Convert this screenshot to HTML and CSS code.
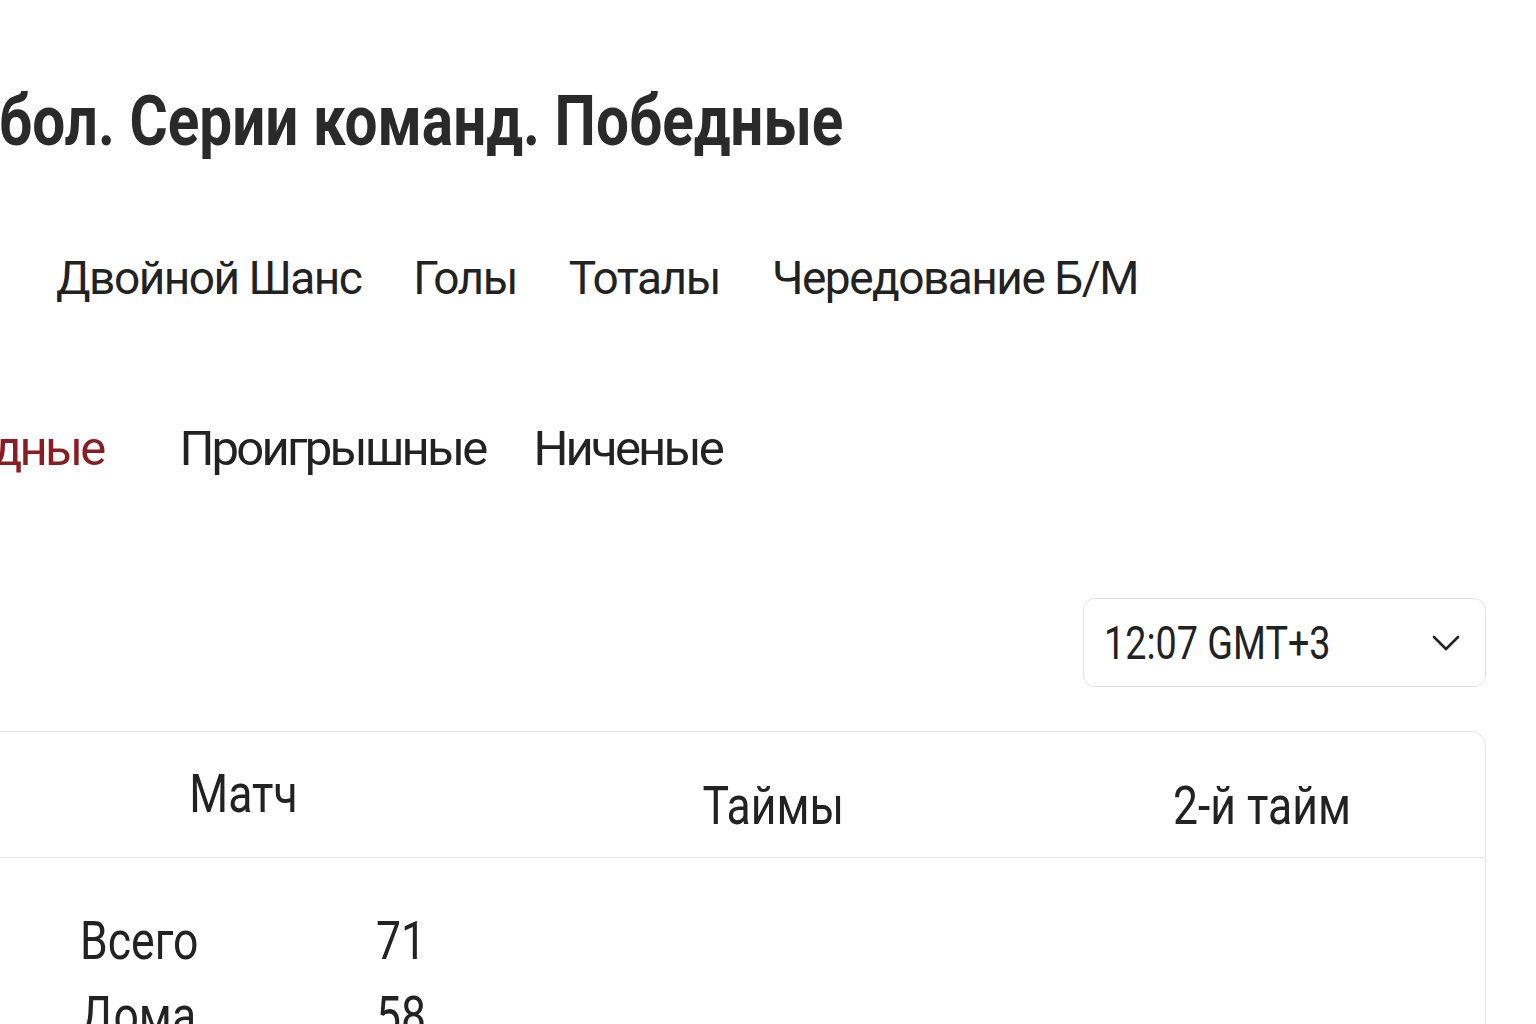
FILE: index.html
```html
<!DOCTYPE html>
<html lang="ru">
<head>
<meta charset="utf-8">
<title>Футбол. Серии команд. Победные</title>
<link rel="stylesheet" href="styles.css">
</head>
<body>
<div class="page">
  <h1 class="title"><span class="title-text">Футбол. Серии команд. Победные</span></h1>

  <nav class="tabs tabs-main">
    <a class="tab">Двойной Шанс</a>
    <a class="tab">Голы</a>
    <a class="tab">Тоталы</a>
    <a class="tab">Чередование Б/М</a>
  </nav>

  <nav class="tabs tabs-sub">
    <a class="tab active">Победные</a>
    <a class="tab">Проигрышные</a>
    <a class="tab">Ниченые</a>
  </nav>

  <div class="toolbar">
    <button class="select">
      <span class="select-text">12:07 GMT+3</span>
      <svg class="chevron" width="28" height="17" viewBox="0 0 28 17"><path d="M2 2 L14 14 L26 2" fill="none" stroke="#222" stroke-width="2.6" stroke-linecap="round" stroke-linejoin="round"/></svg>
    </button>
  </div>

  <section class="card">
    <div class="card-head">
      <div class="head-cell head-match"><span class="cond">Матч</span></div>
      <div class="head-cell"><span class="cond">Таймы</span></div>
      <div class="head-cell"><span class="cond">2-й тайм</span></div>
    </div>
    <div class="card-body">
      <div class="row"><span class="cond label">Всего</span><span class="cond num">71</span></div>
      <div class="row"><span class="cond label">Дома</span><span class="cond num">58</span></div>
      <div class="row"><span class="cond label">В гостях</span><span class="cond num">13</span></div>
    </div>
  </section>
</div>
</body>
</html>
```

FILE: styles.css
```css
html, body {
  margin: 0;
  padding: 0;
  background: #ffffff;
  overflow: hidden;
}

body {
  font-family: Roboto, "Liberation Sans", sans-serif;
  color: #222222;
  width: 1536px;
  height: 1024px;
}

.page {
  padding-right: 50px;
}

.title {
  margin: 0;
  padding-top: 86px;
  font-size: 70px;
  line-height: 70px;
  font-weight: 700;
  color: #2a2a2a;
  white-space: nowrap;
}

.title-text {
  display: inline-block;
  margin-left: -108px;
  transform: scaleX(0.835);
  transform-origin: left center;
}

.tabs {
  display: flex;
  white-space: nowrap;
}

.tab {
  color: #222222;
  text-decoration: none;
}

.tabs-main {
  margin-top: 99px;
  padding-left: 56px;
  gap: 52px;
  font-size: 46px;
  line-height: 46px;
  letter-spacing: -1.5px;
}

.tabs-sub {
  margin-top: 123px;
  margin-left: -112px;
  gap: 48px;
  font-size: 49px;
  line-height: 49px;
  letter-spacing: -2.8px;
}

.tabs-sub .active {
  color: #8a1c22;
  margin-right: 28px;
}

.toolbar {
  display: flex;
  justify-content: flex-end;
  margin-top: 125px;
}

.select {
  display: flex;
  align-items: center;
  justify-content: space-between;
  width: 403px;
  height: 89px;
  box-sizing: border-box;
  padding: 0 25px 0 20px;
  background: #ffffff;
  border: 1.5px solid #e2e2e2;
  border-radius: 12px;
  font-family: Roboto, "Liberation Sans", sans-serif;
  font-size: 46px;
  line-height: 46px;
  color: #222222;
}

.select-text {
  display: inline-block;
  transform: scaleX(0.82);
  transform-origin: left center;
  white-space: nowrap;
}

.chevron {
  display: block;
  margin-top: 2px;
}

.card {
  margin-top: 44px;
  margin-left: -20px;
  border: 1.5px solid #e6e6e6;
  border-radius: 15px;
  background: #ffffff;
}

.card-head {
  display: grid;
  grid-template-columns: 526px 532px 1fr;
  height: 125px;
  border-bottom: 1.5px solid #e6e6e6;
  font-size: 53px;
  line-height: 53px;
}

.head-cell {
  display: flex;
  justify-content: center;
  align-items: center;
  padding-top: 24px;
  white-space: nowrap;
}

.head-cell.head-match {
  padding-top: 0;
  padding-bottom: 0;
}

.cond {
  display: inline-block;
  transform: scaleX(0.84);
}

.head-cell .cond {
  transform-origin: center center;
}

.card-body {
  padding-top: 57px;
  padding-left: 99px;
  font-size: 53px;
  line-height: 53px;
}

.row {
  display: grid;
  grid-template-columns: 296px auto;
  height: 75px;
  white-space: nowrap;
}

.row .cond {
  transform-origin: left center;
}

.num {
  color: #222222;
}
```
